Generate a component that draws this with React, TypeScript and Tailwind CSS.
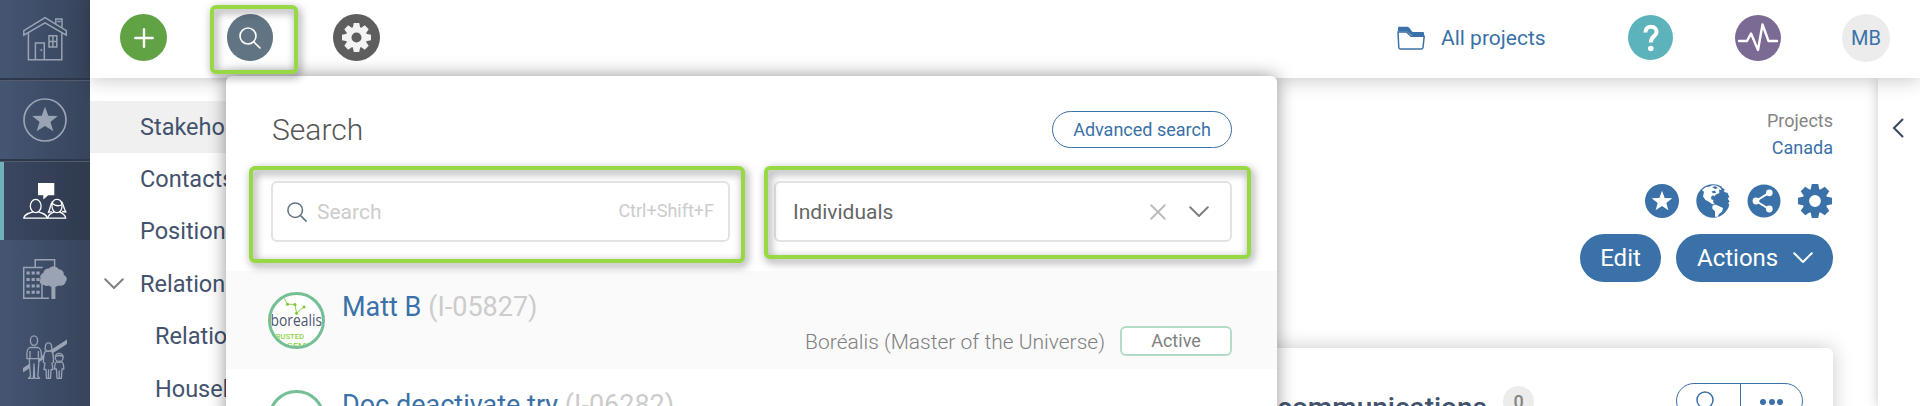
import type { ReactNode } from 'react';

type MenuItem = {
    label: string;
    active?: boolean;
    open?: boolean;
    child?: boolean;
};

type Result = {
    name: string;
    code: string;
    role?: string;
    status?: string;
};

const menuItems: MenuItem[] = [
    { label: 'Stakeholders', active: true },
    { label: 'Contacts' },
    { label: 'Positions' },
    { label: 'Relationships', open: true },
    { label: 'Relationships', child: true },
    { label: 'Households', child: true },
];

const results: Result[] = [
    { name: 'Matt B', code: '(I-05827)', role: 'Boréalis (Master of the Universe)', status: 'Active' },
    { name: 'Doc deactivate try', code: '(I-06282)' },
];

const gearAngles = [0, 45, 90, 135, 180, 225, 270, 315];

function Gear({ className }: { className: string }) {
    return (
        <svg viewBox="-17 -17 34 34" className={className}>
            <circle r="9.2" fill="none" stroke="currentColor" strokeWidth="6.6" />
            {gearAngles.map(angle => (
                <path key={angle} d="M-4.4 -11L-3.2 -17H3.2L4.4 -11Z" fill="currentColor" transform={`rotate(${angle})`} />
            ))}
        </svg>
    );
}

function SearchIcon({ className }: { className: string }) {
    return (
        <svg viewBox="0 0 22 22" fill="none" stroke="currentColor" strokeLinecap="round" className={className}>
            <circle cx="9" cy="9" r="8" />
            <path d="M14.7 14.7L21 21" />
        </svg>
    );
}

function ChevronDown({ className }: { className: string }) {
    return (
        <svg viewBox="0 0 20 12" fill="none" stroke="currentColor" strokeWidth="2" strokeLinecap="round" strokeLinejoin="round" className={className}>
            <path d="M1.2 1.2L10 10L18.8 1.2" />
        </svg>
    );
}

function HouseIcon() {
    return (
        <svg viewBox="22 15 46 46" fill="none" stroke="currentColor" strokeWidth="1.5" className="h-[46px] w-[46px]">
            <path d="M23.8 29.6L45 16.6L66.3 29.6V34.2L45 21.8L23.8 34.2Z" />
            <path d="M55.8 22.8V18h6.2v8.8M57.4 20.6h3.2" />
            <path d="M28.4 32V58.7H61.8V32" />
            <path d="M35.4 58.5V42H44.3V58.5" />
            <path d="M49 34.8H56.8V46H49ZM52.9 35V46M49 40.4H56.8" />
            <path d="M40 48.3l1.6 1.8V48" strokeWidth="1" />
        </svg>
    );
}

function StarIcon() {
    return (
        <svg viewBox="22 97 46 46" className="h-[46px] w-[46px]">
            <circle cx="45" cy="120" r="21" fill="none" stroke="currentColor" strokeWidth="1.7" />
            <path fill="currentColor" d="M45 106.7L48.3 115.7L57.8 116L50.4 122L53.4 131.2L45 126L36.6 131.2L39.6 122L32.2 116L41.7 115.7Z" />
        </svg>
    );
}

function PeopleIcon() {
    return (
        <svg viewBox="22 178 46 46" fill="none" stroke="currentColor" strokeWidth="1.3" strokeLinejoin="round" className="h-[46px] w-[46px]">
            <path fill="currentColor" stroke="none" d="M38 183H54.3V195.2H48.2L43.3 199.6V195.2H38Z" />
            <ellipse cx="35.7" cy="206" rx="5.4" ry="6.6" />
            <path d="M33 211.8C28 213.3 24.3 214.5 23.7 218.2H47.4C46.8 214.5 43.2 213.3 38.3 211.8" />
            <path d="M54.5 211.8C51 212.8 48.6 214 47.6 218.2H65.7C65.2 214.5 62.5 213 59.3 211.8" />
            <path d="M52 207C51.5 201.5 54 199.4 57 199.4S62.3 201.5 62 207C61.5 210.5 59.5 212.7 57 212.7S52.6 210.5 52 207ZM52.3 203.5Q57 207.5 62 204.5" />
            <path d="M52.6 201.5C50 205 50.4 209 48.3 212.5L51.8 211.5M61.4 201.5C64 205 63.6 209 66 212L62.2 211.5" />
        </svg>
    );
}

function BuildingIcon() {
    return (
        <svg viewBox="22 256 46 46" fill="currentColor" className="h-[46px] w-[46px]">
            <path fill="none" stroke="currentColor" strokeWidth="1.5" d="M35.2 267V259.8H54.6V268M42 268V267.5H23.7V298.3H49M42 283V298" />
            <path d="M26.5 271.5h3.2v3h-3.2zM31.6 271.5h3.2v3h-3.2zM36.4 271.5h3.2v3h-3.2zM26.5 278h3.2v3h-3.2zM31.6 278h3.2v3h-3.2zM36.4 278h3.2v3h-3.2zM26.5 284.5h3.2v3h-3.2zM31.6 284.5h3.2v3h-3.2zM36.4 284.5h3.2v3h-3.2zM26.5 290.7h3.2v3h-3.2zM31.6 290.7h3.2v3h-3.2zM36.4 290.7h3.2v3h-3.2z" />
            <path d="M44 285C40 285 38.6 281 40.5 278.8C39.6 275.5 41.8 273.4 43.4 273C43.8 269.5 47 268.3 49 268.5C51 265.8 57 265.8 58.8 269.2C62.2 269.4 64.2 272 63.8 275C66.8 276 67.8 280 65.6 281.8C65.2 285.4 61 286.6 58.5 285.4L55.4 287V299H51.4V287L48.5 285.6C47 286.2 45 286 44 285Z" />
        </svg>
    );
}

function FamilyIcon() {
    return (
        <svg viewBox="22 334 46 46" className="h-[46px] w-[46px] text-[#99a3b3]">
            <path fill="currentColor" d="M23 368L67 339.5V344L23 372.5Z" />
            <g fill="#414f6a" stroke="currentColor" strokeWidth="1.3" strokeLinejoin="round">
                <path d="M30 347.5C27.6 348.4 26.9 351 26.9 354V358.6H29.4V363L30.5 376.2L28.5 378.3H33.4L34 364L34.7 378.3H39.6L37.8 376.2L38.8 363V358.6H41.3V354C41.3 351 40.4 348.4 38 347.5Z" />
                <ellipse cx="34" cy="340.6" rx="3.6" ry="4.8" />
                <path d="M30 351V358.5M38.4 351V358.5M29.5 358.6H38.8" fill="none" />
                <path d="M46 351C43.8 352 43.6 355 43.4 362.5L45 363L44 369.5H46L46.5 378.3H48.5V370V378.3H50.6L51 369.5H53L52 363L53.6 362.5C53.4 355 53.2 352 51 351Z" />
                <path d="M45 349.5C45.4 345 45.6 342.8 48.5 342.8S51.6 345 52 349.5L50 351H47Z" />
                <path d="M56.5 362C54.6 363 54.6 365 54.6 369H56.4L57 378.3H59.2V371V378.3H61.4L62 369H63.8C63.8 365 63.8 363 62 362Z" />
                <circle cx="59.2" cy="357.4" r="4" />
                <path d="M55.4 356.4Q59.2 354.6 63 356.4" fill="none" />
            </g>
        </svg>
    );
}

function SidebarItem({ children, active = false }: { children: ReactNode; active?: boolean }) {
    return (
        <div
            className={
                active
                    ? 'flex h-[78px] items-center border-l-4 border-[#70b1ba] bg-gradient-to-r from-[#3a4761] to-[#2f3a4e] pl-[18px] text-white'
                    : 'flex h-[81px] items-center border-b border-[#535b6c] pb-0.5 pl-[22px] text-[#99a3b3] shadow-[inset_0_-2px_0_#2d384c]'
            }
        >
            {children}
        </div>
    );
}

function Sidebar() {
    return (
        <aside className="h-full w-[90px] shrink-0 bg-gradient-to-r from-[#455673] to-[#37445b]">
            <SidebarItem><HouseIcon /></SidebarItem>
            <SidebarItem><StarIcon /></SidebarItem>
            <SidebarItem active><PeopleIcon /></SidebarItem>
            <div className="flex flex-col gap-8 pt-4 pl-[22px] text-[#99a3b3]">
                <BuildingIcon />
                <FamilyIcon />
            </div>
        </aside>
    );
}

function Header() {
    return (
        <header className="relative z-10 flex h-[78px] shrink-0 items-center bg-white pb-[3px] pl-[30px] shadow-[0_2px_18px_rgba(0,0,0,0.22)]">
            <button className="flex h-[47px] w-[47px] items-center justify-center rounded-full bg-[#60a244]">
                <svg viewBox="0 0 20 20" stroke="white" strokeWidth="2.4" strokeLinecap="round" className="h-5 w-5">
                    <path d="M10 1.2V18.8M1.2 10H18.8" />
                </svg>
            </button>
            <button className="ml-[60px] flex h-[47px] w-[46px] items-center justify-center rounded-full bg-[#607483] text-white">
                <SearchIcon className="h-[22px] w-[22px] stroke-[1.6]" />
            </button>
            <button className="ml-[60px] flex h-[47px] w-[47px] items-center justify-center rounded-full bg-[#5e5e5e] text-[#f3f3f3]">
                <Gear className="h-[29px] w-[29px]" />
            </button>

            <div className="ml-auto flex items-center text-[#3a71a8]">
                <svg viewBox="0 0 28 24" className="h-6 w-7">
                    <path d="M1 7V1.7Q1 .8 2 .8H10.5Q11.3.8 12 1.6L15.5 6H26Q27 6 27 7V10.5H16L10 5.5H1Z" fill="currentColor" />
                    <path d="M1 6H9.5L14 10.3H27.2L26 21.5Q25.8 22.9 24.5 22.9H3.2Q2 22.9 1.8 21.5Z" fill="white" stroke="currentColor" strokeWidth="1.5" />
                </svg>
                <span className="ml-4 w-[105px] pt-0.5 text-[21px] whitespace-nowrap">All projects</span>
            </div>
            <div className="ml-[82px] flex h-[45px] w-[45px] items-center justify-center rounded-full bg-[#5cb3bb]">
                <svg viewBox="0 0 16 28" className="h-7 w-4" fill="none" stroke="white" strokeWidth="4">
                    <path d="M2.4 8.5C2.4 4.7 4.6 2.8 8 2.8S13.6 4.7 13.6 8C13.6 12 7.8 12.3 7.8 18.5" />
                    <circle cx="7.8" cy="24.5" r="2.8" fill="white" stroke="none" />
                </svg>
            </div>
            <div className="ml-[62px] flex h-[46px] w-[46px] items-center justify-center rounded-full bg-[#7b6a94]">
                <svg viewBox="0 0 46 46" className="h-[46px] w-[46px]" fill="none" stroke="white" strokeWidth="2.4" strokeLinecap="round" strokeLinejoin="round">
                    <path d="M4 26H12L16 18.5L23 35L27.5 9.5L33.5 26H42" />
                </svg>
            </div>
            <div className="mr-[30px] ml-[61px] flex h-12 w-12 items-center justify-center rounded-full bg-[#ececec] text-xl text-[#3a71a8]">
                MB
            </div>
        </header>
    );
}

function SideMenu() {
    return (
        <nav className="w-[300px] shrink-0 pt-[23px] text-[23.5px] text-[#43526d]">
            {menuItems.map((item, index) => (
                <div
                    key={index}
                    className={`flex h-[52.4px] items-center pl-3.5 ${item.active ? 'bg-[#f0f0f0]' : ''}`}
                >
                    <span className={`flex shrink-0 ${item.child ? 'w-[51px]' : 'w-9'}`}>
                        {item.open && <ChevronDown className="h-3 w-5 shrink-0 text-[#808080]" />}
                    </span>
                    {item.label}
                </div>
            ))}
        </nav>
    );
}

function RecordActions() {
    return (
        <div className="flex flex-col items-end pr-[45px] text-[#3a71a8]">
            <div className="mt-[29px] text-right text-lg leading-[27px]">
                <div className="text-[#848484]">Projects</div>
                <div>Canada</div>
            </div>
            <div className="mt-[23px] mr-px flex gap-[17px]">
                <svg viewBox="0 0 34 34" className="h-[34px] w-[34px]">
                    <circle cx="17" cy="17" r="17" fill="currentColor" />
                    <path fill="white" d="M17 6.7L19.7 14L27.3 14.3L21.3 18.9L23.4 26.2L17 22L10.6 26.2L12.7 18.9L6.7 14.3L14.3 14Z" />
                </svg>
                <svg viewBox="0 0 34 34" className="h-[34px] w-[34px]">
                    <circle cx="17" cy="17" r="16.7" fill="currentColor" />
                    <path fill="white" d="M6 6L10 3L14 2.5L16 1.3L20 1.6L24 3.2L25.6 6L23 5.8L23.4 9L20 10.5L18 12.5L17.2 11L15 13L15.4 15.5L17.5 16L17 18L19 20.5L16 20L12.5 17.5L9.5 16L7 12.5L8 8Z" />
                    <path fill="white" d="M16.5 21.5L20 20.8L27 24L26.2 27.5L23 30L21.5 33L19 32.5L19 27.5L16.3 24.5Z" />
                    <path fill="white" d="M25.5 3.2L29 5.8L27.5 7L29.5 8.5L31.5 8.5L34 14L31.8 13.5L32.5 16L34 17.5L32 19L34 21V3L28 0Z" />
                    <path fill="currentColor" d="M16 3L19.5 2.2L22 4L19 5ZM15.5 7.5L19 6.5L20 9L17 9.2Z" />
                </svg>
                <svg viewBox="0 0 34 34" className="h-[34px] w-[34px]">
                    <circle cx="17" cy="17" r="16.5" fill="currentColor" />
                    <path d="M22 8.8L9 17L22 25" fill="none" stroke="white" strokeWidth="2" />
                    <circle cx="22.3" cy="8.8" r="3.4" fill="white" />
                    <circle cx="9" cy="17" r="3.4" fill="white" />
                    <circle cx="22.3" cy="25" r="3.4" fill="white" />
                </svg>
                <Gear className="h-[34px] w-[34px]" />
            </div>
            <div className="mt-4 flex gap-[15px] text-2xl text-white">
                <button className="h-12 w-[81px] rounded-full bg-[#3a71a8]">Edit</button>
                <button className="flex h-12 w-[157px] items-center justify-between rounded-full bg-[#3a71a8] pr-5 pl-[21px]">
                    Actions
                    <ChevronDown className="h-3 w-5" />
                </button>
            </div>
        </div>
    );
}

function CommunicationsCard() {
    return (
        <section className="mt-[66px] mr-[45px] ml-[600px] flex h-28 items-start rounded-md bg-white pt-[35px] pr-[30px] shadow-[0_0_20px_rgba(0,0,0,0.22)]">
            <h2 className="mt-[9px] ml-auto text-[28px] leading-8 font-medium whitespace-nowrap text-[#43526d]">Linked communications</h2>
            <span className="mt-[3px] mr-[142px] ml-4 flex h-[31px] w-[31px] items-center justify-center rounded-full bg-[#ececec] text-lg font-medium text-[#848484]">0</span>
            <div className="flex h-9 w-[127px] rounded-full border border-[#3a71a8] text-[#3a71a8]">
                <div className="flex w-16 justify-center border-r border-[#3a71a8] pt-[7px] pr-1">
                    <SearchIcon className="h-[22px] w-[22px] stroke-[1.5]" />
                </div>
                <div className="flex flex-1 justify-center gap-[2.5px] pt-[15px]">
                    <span className="h-1.5 w-1.5 rounded-full bg-[#3a71a8]" />
                    <span className="h-1.5 w-1.5 rounded-full bg-[#3a71a8]" />
                    <span className="h-1.5 w-1.5 rounded-full bg-[#3a71a8]" />
                </div>
            </div>
        </section>
    );
}

function Avatar({ logo }: { logo: boolean }) {
    return (
        <div className="h-[57px] w-[57px] shrink-0 overflow-hidden rounded-full border-[3px] border-[#74bf95] bg-white">
            {logo && (
                <svg viewBox="0 0 51 51" className="h-full w-full">
                    <path d="M13 3L16.5 9.2L24 9.4L25.5 18L33 12" fill="none" stroke="#8fd14a" strokeWidth="1" />
                    <g fill="#7ac832">
                        <circle cx="16.5" cy="9.2" r="1.5" />
                        <circle cx="24" cy="9.4" r="1.5" />
                        <circle cx="25.5" cy="18.2" r="1.5" />
                        <circle cx="33" cy="12" r="1.5" />
                    </g>
                    <text x="-0.5" y="31" fontSize="15.5" fontWeight="500" textLength="51.5" lengthAdjust="spacingAndGlyphs" fill="#4c5672" style={{ fontFamily: 'Open Sans, sans-serif' }}>borealis</text>
                    <text x="0" y="44.3" fontSize="8" fontWeight="500" textLength="33" lengthAdjust="spacingAndGlyphs" fill="#8ad33f">TRUSTED</text>
                    <text x="-8" y="53" fontSize="8" fontWeight="500" textLength="60" lengthAdjust="spacingAndGlyphs" fill="#8ad33f">ENGAGEMENT</text>
                </svg>
            )}
        </div>
    );
}

function SearchPanel() {
    return (
        <div className="absolute top-[76px] left-[226px] z-20 h-[360px] w-[1051px] overflow-hidden rounded-md bg-white shadow-[0_0_18px_rgba(0,0,0,0.42)]">
            <div className="mr-[45px] ml-[46px] flex items-center justify-between pt-[35px]">
                <h1 className="text-3xl leading-[37px] font-light text-[#555]">Search</h1>
                <button className="h-[37px] w-[180px] rounded-full border border-[#3a71a8] text-[18px] leading-8 text-[#3a71a8]">Advanced search</button>
            </div>

            <div className="mt-[33px] mr-[45px] ml-[45px] flex justify-between">
                <div className="flex h-[61px] w-[459px] items-center rounded-md border-2 border-[#e3e3e3] px-3.5">
                    <SearchIcon className="h-5 w-5 stroke-[1.7] text-[#607483]" />
                    <span className="ml-2.5 pt-[3px] text-[21px] text-[#ccc]">Search</span>
                    <span className="ml-auto pb-0.5 text-[18px] text-[#ccc]">Ctrl+Shift+F</span>
                </div>
                <div className="flex h-[61px] w-[458px] items-center rounded-md border-2 border-[#e3e3e3] pr-[21px] pl-[17px]">
                    <span className="pt-0.5 text-[21px] text-[#666]">Individuals</span>
                    <svg viewBox="0 0 16 16" stroke="#bdbdbd" strokeWidth="2" strokeLinecap="round" className="ml-auto h-4 w-4">
                        <path d="M1.2 1.2L14.8 14.8M14.8 1.2L1.2 14.8" />
                    </svg>
                    <ChevronDown className="ml-[23px] h-3 w-5 text-[#808080]" />
                </div>
            </div>

            <ul className="mt-[29px]">
                {results.map(result => (
                    <li key={result.code} className="flex h-[98px] items-start pt-[21px] pr-[45px] pl-[41.5px] odd:bg-[#fafafa]">
                        <Avatar logo={result.name === 'Matt B'} />
                        <div className="-mt-px ml-[17.5px] flex-1">
                            <div className="text-[27px] leading-8 whitespace-nowrap text-[#3a71a8]">
                                {result.name} <span className="text-[#ccc]">{result.code}</span>
                            </div>
                            {result.status && (
                                <div className="mt-[3px] flex items-center justify-end">
                                    <span className="pt-0.5 text-[21px] leading-7 font-light text-[#808080]">{result.role}</span>
                                    <span className="ml-[15px] h-[30px] w-28 rounded-md border-2 border-[#b3dcc6] bg-white text-center text-[18px] leading-[26px] text-[#808080]">
                                        {result.status}
                                    </span>
                                </div>
                            )}
                        </div>
                    </li>
                ))}
            </ul>
        </div>
    );
}

export default function App() {
    return (
        <div className="relative flex h-[406px] w-[1920px] overflow-hidden bg-white font-['Roboto',sans-serif]">
            <Sidebar />
            <div className="flex min-w-0 flex-1 flex-col">
                <Header />
                <div className="flex min-h-0 flex-1">
                    <SideMenu />
                    <main className="min-w-0 flex-1">
                        <RecordActions />
                        <CommunicationsCard />
                    </main>
                    <div className="w-[42px] shrink-0 bg-white pt-10 pl-3.5 shadow-[0_0_12px_rgba(0,0,0,0.22)]">
                        <svg viewBox="0 0 12 20" fill="none" stroke="#3a4761" strokeWidth="2" strokeLinecap="round" className="h-5 w-3">
                            <path d="M10.5 1.5L2 10L10.5 18.5" />
                        </svg>
                    </div>
                </div>
            </div>

            <SearchPanel />

            {/* Highlight frames */}
            <div className="absolute top-[5px] left-[210px] z-30 h-[69px] w-[88px] rounded-md border-4 border-[#97d943] drop-shadow-[2px_3px_4px_rgba(0,0,0,0.5)]" />
            <div className="absolute top-[166px] left-[249px] z-30 h-[97px] w-[496px] rounded-md border-4 border-[#97d943] drop-shadow-[2px_3px_4px_rgba(0,0,0,0.5)]" />
            <div className="absolute top-[166px] left-[764px] z-30 h-[93px] w-[487px] rounded-md border-4 border-[#97d943] drop-shadow-[2px_3px_4px_rgba(0,0,0,0.5)]" />
        </div>
    );
}
